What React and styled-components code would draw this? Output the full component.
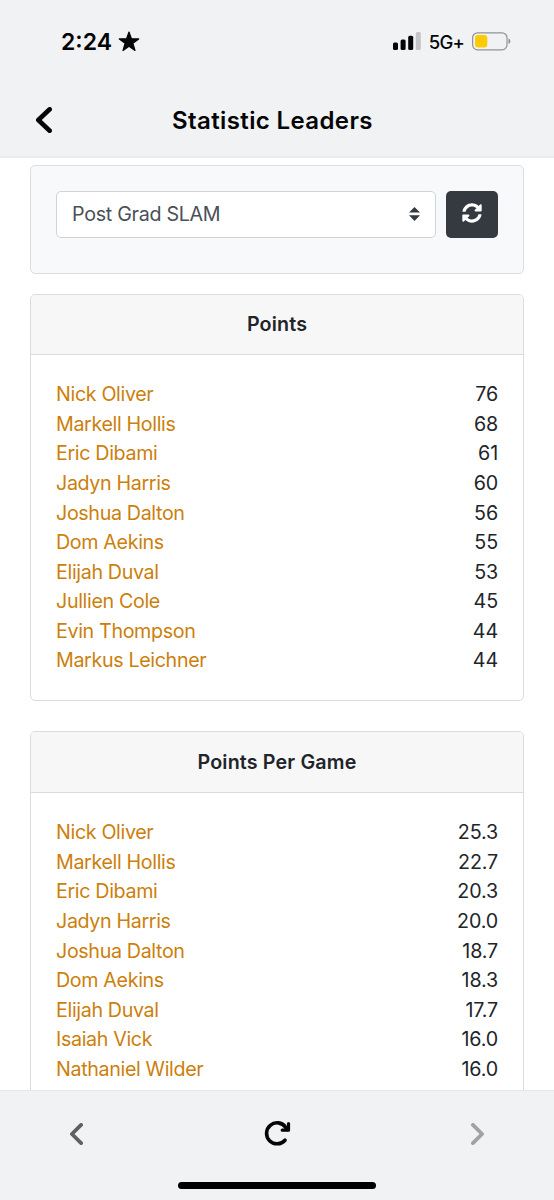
import React from "react";
import styled, { createGlobalStyle } from "styled-components";
import { FaSyncAlt } from "react-icons/fa";

const Global = createGlobalStyle`
  * { box-sizing: border-box; }
  body { margin: 0; background: #fff; font-family: Inter, "Liberation Sans", sans-serif; color: #212529; }
`;

const Screen = styled.div`
  width: 554px;
  height: 1200px;
  display: flex;
  flex-direction: column;
  overflow: hidden;
  background: #fff;
`;

const TopBar = styled.header`
  flex: none;
  height: 158px;
  background: #f1f2f4;
  border-bottom: 2px solid #ebebec;
  color: #060606;
`;

const StatusBar = styled.div`
  height: 82px;
  padding: 0 43px 0 61px;
  display: flex;
  align-items: center;
  justify-content: space-between;
`;

const StatusGroup = styled.div`
  display: flex;
  align-items: center;
  gap: ${(p) => p.$gap}px;
`;

const Clock = styled.span`
  padding-top: 1px;
  font-size: 23px;
  line-height: 28px;
  font-weight: 600;
`;

const Network = styled.span`
  font-size: 18.5px;
  line-height: 24px;
  font-weight: 500;
  letter-spacing: -0.8px;
  padding-top: 2px;
`;

const NavBar = styled.div`
  height: 76px;
  padding: 0 36px;
  display: grid;
  grid-template-columns: 20px 1fr 20px;
  align-items: center;
`;

const Title = styled.h1`
  margin: 0;
  padding: 1px 9px 0 0;
  text-align: center;
  font-size: 24px;
  line-height: 30px;
  font-weight: 600;
  letter-spacing: 0.38px;
`;

const Content = styled.main`
  flex: 1;
  min-height: 0;
  overflow: hidden;
  padding: 6.5px 30px 0;
`;

const FilterPanel = styled.section`
  height: 109px;
  margin-bottom: 20px;
  padding: 25px;
  display: flex;
  align-items: flex-start;
  gap: 10px;
  background: #f8f9fb;
  border: 1.5px solid #dcddde;
  border-radius: 5px;
`;

const Select = styled.button`
  flex: 1;
  height: 47px;
  padding: 0 15px 1px;
  display: flex;
  align-items: center;
  justify-content: space-between;
  background: #fff;
  border: 1.5px solid #ced4da;
  border-radius: 5px;
  font: 400 19.7px/28px Inter, "Liberation Sans", sans-serif;
  letter-spacing: -0.3px;
  color: #495057;
`;

const RefreshButton = styled.button`
  width: 52px;
  height: 47px;
  padding: 0 0 3px;
  display: flex;
  align-items: center;
  justify-content: center;
  border: 0;
  border-radius: 5px;
  background: #343a40;
  color: #fff;
`;

const Card = styled.section`
  margin-bottom: 30px;
  border: 1.5px solid #dcdcdc;
  border-radius: 5px;
  overflow: hidden;
  background: #fff;
`;

const CardHeader = styled.h2`
  margin: 0;
  height: 60.5px;
  padding-bottom: 1px;
  display: flex;
  align-items: center;
  justify-content: center;
  background: #f7f7f7;
  border-bottom: 1.5px solid #dcdcdc;
  font-size: 19.7px;
  font-weight: 600;
  letter-spacing: 0.15px;
`;

const CardBody = styled.ul`
  list-style: none;
  margin: 0;
  padding: 25.4px 25px 24.6px;
`;

const Row = styled.li`
  display: flex;
  justify-content: space-between;
  height: 29.56px;
  line-height: 29.56px;
  font-size: 19.7px;
`;

const Player = styled.a`
  color: #cc7f0c;
  letter-spacing: -0.36px;
`;

const Value = styled.span`
  letter-spacing: -0.15px;
`;

const BottomBar = styled.footer`
  flex: none;
  height: 110px;
  background: #f1f2f4;
  border-top: 1.5px solid #e6e6e7;
  display: flex;
  flex-direction: column;
  align-items: center;
`;

const Tools = styled.nav`
  width: 100%;
  height: 85px;
  padding: 0 70px;
  display: flex;
  align-items: center;
  justify-content: space-between;
`;

const HomeIndicator = styled.div`
  margin-top: 5.5px;
  width: 198px;
  height: 7px;
  border-radius: 4px;
  background: #000;
`;

const points = [
  ["Nick Oliver", "76"], ["Markell Hollis", "68"], ["Eric Dibami", "61"],
  ["Jadyn Harris", "60"], ["Joshua Dalton", "56"], ["Dom Aekins", "55"],
  ["Elijah Duval", "53"], ["Jullien Cole", "45"], ["Evin Thompson", "44"],
  ["Markus Leichner", "44"],
];

const pointsPerGame = [
  ["Nick Oliver", "25.3"], ["Markell Hollis", "22.7"], ["Eric Dibami", "20.3"],
  ["Jadyn Harris", "20.0"], ["Joshua Dalton", "18.7"], ["Dom Aekins", "18.3"],
  ["Elijah Duval", "17.7"], ["Isaiah Vick", "16.0"], ["Nathaniel Wilder", "16.0"],
];

function Leaders({ title, rows }) {
  return (
    <Card>
      <CardHeader>{title}</CardHeader>
      <CardBody>
        {rows.map(([name, value]) => (
          <Row key={name}>
            <Player>{name}</Player>
            <Value>{value}</Value>
          </Row>
        ))}
      </CardBody>
    </Card>
  );
}

function Chevron({ width, height, stroke, color, flip }) {
  const m = stroke / 2;
  const near = flip ? width - m : m;
  const far = flip ? m : width - m;
  return (
    <svg width={width} height={height} fill="none" stroke={color} strokeWidth={stroke} strokeLinecap="round" strokeLinejoin="round">
      <path d={`M${far} ${m}L${near} ${height / 2}L${far} ${height - m}`} />
    </svg>
  );
}

export default function App() {
  return (
    <Screen>
      <Global />
      <TopBar>
        <StatusBar>
          <StatusGroup $gap={6}>
            <Clock>2:24</Clock>
            <svg width="22" height="21" viewBox="0 0 22 21">
              <path d="M11 1 13.4 7.7 20.7 7.9 14.9 12.3 17 19.5 11 15.3 5 19.5 7.1 12.3 1.3 7.9 8.6 7.7Z" fill="#060606" stroke="#060606" strokeWidth="1.2" strokeLinejoin="round" />
            </svg>
          </StatusGroup>
          <StatusGroup $gap={8}>
            <svg width="28" height="18" viewBox="0 0 28 18" fill="#060606">
              <rect x="0" y="10.5" width="5" height="7.5" rx="1.5" />
              <rect x="7.6" y="7.5" width="5" height="10.5" rx="1.5" />
              <rect x="15.2" y="3.8" width="5" height="14.2" rx="1.5" />
              <rect x="22.8" y="0" width="5" height="18" rx="1.5" fill="#c4c4c6" />
            </svg>
            <Network>5G+</Network>
            <svg width="39" height="19" viewBox="0 0 39 19">
              <rect x=".6" y=".8" width="34.4" height="17" rx="5" fill="none" stroke="#939396" strokeWidth="1.2" />
              <rect x="3" y="3" width="12.3" height="12.5" rx="3" fill="#fdcb06" />
              <path d="M36.5 6.5Q38.3 7.2 38.3 9.3T36.5 12Z" fill="#8a8a8d" />
            </svg>
          </StatusGroup>
        </StatusBar>
        <NavBar>
          <Chevron width={16} height={26} stroke={4.6} color="#060606" />
          <Title>Statistic Leaders</Title>
        </NavBar>
      </TopBar>
      <Content>
        <FilterPanel>
          <Select>
            Post Grad SLAM
            <svg width="11" height="14" viewBox="0 0 11 14" fill="#343a40">
              <path d="M0 5.5 5.5 0 11 5.5ZM0 8.3H11L5.5 14Z" />
            </svg>
          </Select>
          <RefreshButton aria-label="Refresh"><FaSyncAlt size={20} /></RefreshButton>
        </FilterPanel>
        <Leaders title="Points" rows={points} />
        <Leaders title="Points Per Game" rows={pointsPerGame} />
      </Content>
      <BottomBar>
        <Tools>
          <Chevron width={13} height={22} stroke={3.8} color="#606062" />
          <svg width="28" height="28" viewBox="0 0 28 28" fill="none" stroke="#060606" strokeWidth="3.6" strokeLinecap="round" strokeLinejoin="round">
            <path d="M22 20.2A10.5 10.5 0 1 1 22.6 7.2L24 9" />
            <path d="M25.5 3.6V10.2H19.2" strokeWidth="3.2" />
            <path d="M25.5 6V10.2H21.3Z" fill="#060606" strokeWidth="2" />
          </svg>
          <Chevron width={13} height={22} stroke={3.8} color="#a2a2a4" flip />
        </Tools>
        <HomeIndicator />
      </BottomBar>
    </Screen>
  );
}
